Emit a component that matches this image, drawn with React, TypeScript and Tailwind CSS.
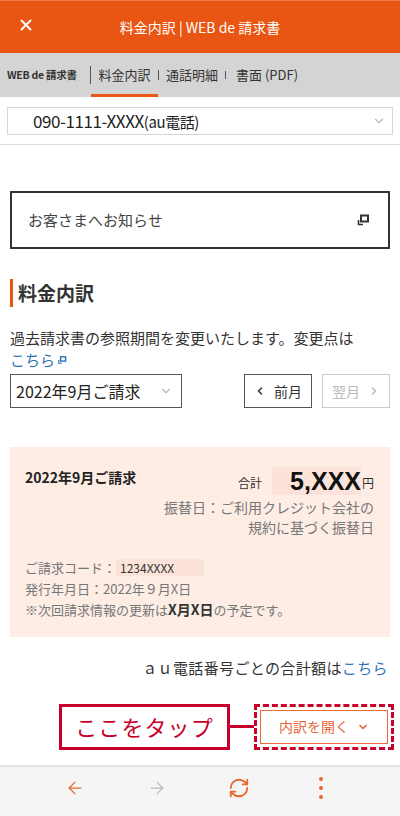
import { ChevronDown, ChevronLeft, ChevronRight, ArrowLeft, ArrowRight, RefreshCw, X } from "lucide-react";

const font = { fontFamily: '"Noto Sans CJK JP", "Noto Sans", sans-serif' };

function ExtIcon({ className }: { className?: string }) {
  return (
    <svg viewBox="0 0 14 14" className={className} fill="none" stroke="currentColor">
      <rect x="5" y="2.5" width="7" height="6" strokeWidth="2" />
      <path d="M2.5 7v4.5H7" strokeWidth="1.6" />
    </svg>
  );
}

export default function App() {
  return (
    <div className="w-[400px] h-[816px] bg-white flex flex-col overflow-hidden text-[#333]" style={font}>
      {/* header */}
      <div className="h-[53px] bg-[#e95513] border-t border-[#f07a45] flex items-center relative">
        <X className="absolute left-[17px] top-[15px] w-[18px] h-[18px] text-white" strokeWidth={2.5} />
        <div className="w-full text-center text-white text-[14px] pt-[1px]">料金内訳 | WEB de 請求書</div>
      </div>

      {/* tabs */}
      <div className="h-[44px] bg-[#d4d4d4] flex items-stretch text-[13px] text-[#333]">
        <div className="w-[90px] flex items-center pl-[7px] text-[10.5px] font-bold tracking-tight">WEB de 請求書</div>
        <div className="w-[1px] bg-[#555] my-[13px]" />
        <div className="w-[67px] flex items-center justify-center border-b-[3px] border-[#e95513] pt-[3px]">料金内訳</div>
        <div className="w-[1px] bg-[#555] my-[17px]" />
        <div className="w-[66px] flex items-center justify-center">通話明細</div>
        <div className="w-[1px] bg-[#555] my-[18px]" />
        <div className="flex items-center pl-[10px]">書面 (PDF)</div>
      </div>

      {/* number select */}
      <div className="pt-[10px] pb-[9px] px-[7px] border-b border-[#dcdcdc]">
        <div className="h-[28px] border border-[#d6d6d6] flex items-center justify-between pl-[25px] pr-[6px]">
          <span className="text-[17px] text-[#222] tracking-tight">
            090-1111-XXXX<span className="text-[15px]">(au電話)</span>
          </span>
          <ChevronDown className="w-[14px] h-[14px] text-[#bbb]" />
        </div>
      </div>

      {/* notice */}
      <div className="px-[10px] pt-[46px]">
        <div className="h-[58px] border-2 border-[#333] flex items-center justify-between pl-[16px] pr-[18px]">
          <span className="text-[15px] text-[#444]">お客さまへお知らせ</span>
          <ExtIcon className="w-[14px] h-[14px] text-[#333]" />
        </div>
      </div>

      {/* heading */}
      <div className="px-[10px] pt-[30px]">
        <div className="border-l-[3px] border-[#e95513] pl-[5px] h-[28px] flex items-center">
          <span className="text-[19px] font-bold text-[#333]">料金内訳</span>
        </div>
        <p className="mt-[20px] text-[15px] leading-[22px] text-[#333]">
          過去請求書の参照期間を変更いたします。変更点は
          <br />
          <span className="text-[#2e72b6] inline-flex items-center">
            こちら
            <ExtIcon className="w-[10px] h-[10px] ml-[2px]" />
          </span>
        </p>
        <div className="mt-[3px] flex items-center">
          <div className="w-[172px] h-[34px] border border-[#555] flex items-center justify-between pl-[5px] pr-[8px]">
            <span className="text-[16px] text-[#222]">2022年9月ご請求</span>
            <ChevronDown className="w-[14px] h-[14px] text-[#bbb]" />
          </div>
          <div className="ml-auto flex gap-[10px]">
            <div className="w-[68px] h-[34px] border border-[#555] flex items-center justify-center gap-[8px] text-[14px]">
              <ChevronLeft className="w-[12px] h-[12px]" strokeWidth={3} />
              <span>前月</span>
            </div>
            <div className="w-[68px] h-[34px] border border-[#ccc] text-[#bbb] flex items-center justify-center gap-[8px] text-[14px]">
              <span>翌月</span>
              <ChevronRight className="w-[12px] h-[12px]" strokeWidth={3} />
            </div>
          </div>
        </div>
      </div>

      {/* bill card */}
      <div className="px-[10px] pt-[39px]">
        <div className="bg-[#fdede5] h-[190px] pl-[15px] pr-[16px] pt-[20px]">
          <div className="flex justify-between">
            <span className="text-[14px] font-bold text-[#222]">2022年9月ご請求</span>
            <div className="flex items-end">
              <span className="text-[12px] text-[#333] mb-[3px] mr-[10px]">合計</span>
              <span className="bg-[#fbe3d9] pl-[18px] text-[25px] font-bold leading-[28px] text-[#111]" style={{ fontFamily: '"Liberation Sans", sans-serif' }}>
                5,XXX
              </span>
              <span className="text-[12px] text-[#333] mb-[3px] ml-[1px]">円</span>
            </div>
          </div>
          <div className="text-right text-[14px] leading-[20px] text-[#777] mt-[2px]">
            <div>振替日：ご利用クレジット会社の</div>
            <div>規約に基づく振替日</div>
          </div>
          <div className="mt-[20px] text-[13px] leading-[21px] text-[#777]">
            <div>
              ご請求コード：<span className="bg-[#fbe3d9] pl-[4px] pr-[30px] text-[#333] text-[12px]">1234XXXX</span>
            </div>
            <div>発行年月日：2022年９月X日</div>
            <div>
              ※次回請求情報の更新は<span className="font-bold text-[#333] text-[14px]">X月X日</span>の予定です。
            </div>
          </div>
        </div>
      </div>

      <div className="px-[12px] pt-[20px] text-right text-[15px] text-[#333] tracking-wide">
        ａｕ電話番号ごとの合計額は<span className="text-[#2e72b6]">こちら</span>
      </div>

      {/* tap hint */}
      <div className="flex items-center pl-[59px] pt-[24px]">
        <div className="w-[171px] h-[46px] border-[3px] border-[#c8002a] flex items-center justify-center text-[#c8002a] text-[22px] tracking-wider">
          ここをタップ
        </div>
        <div className="w-[24px] h-[3px] bg-[#c8002a]" />
        <div className="border-[3px] border-dashed border-[#c8002a] p-[3px]">
          <div className="w-[128px] h-[34px] border border-[#e96a3a] flex items-center justify-center gap-[8px] text-[#e8683a] text-[14px]">
            <span>内訳を開く</span>
            <ChevronDown className="w-[12px] h-[12px]" strokeWidth={3.5} />
          </div>
        </div>
      </div>

      {/* bottom nav */}
      <div className="mt-auto h-[51px] bg-[#f5f5f5] border-t-2 border-[#e3e3e3] flex items-center pl-[34px] pb-[8px]">
        <div className="w-[82px] flex justify-center">
          <ArrowLeft className="w-[20px] h-[20px] text-[#e8682f]" strokeWidth={1.5} />
        </div>
        <div className="w-[82px] flex justify-center">
          <ArrowRight className="w-[20px] h-[20px] text-[#bbb]" strokeWidth={1.5} />
        </div>
        <div className="w-[82px] flex justify-center">
          <RefreshCw className="w-[22px] h-[22px] text-[#e8682f]" strokeWidth={2} />
        </div>
        <div className="w-[82px] flex justify-center">
          <div className="flex flex-col gap-[5px]">
            <div className="w-[4px] h-[4px] rounded-full bg-[#e8682f]" />
            <div className="w-[4px] h-[4px] rounded-full bg-[#e8682f]" />
            <div className="w-[4px] h-[4px] rounded-full bg-[#e8682f]" />
          </div>
        </div>
      </div>
    </div>
  );
}
